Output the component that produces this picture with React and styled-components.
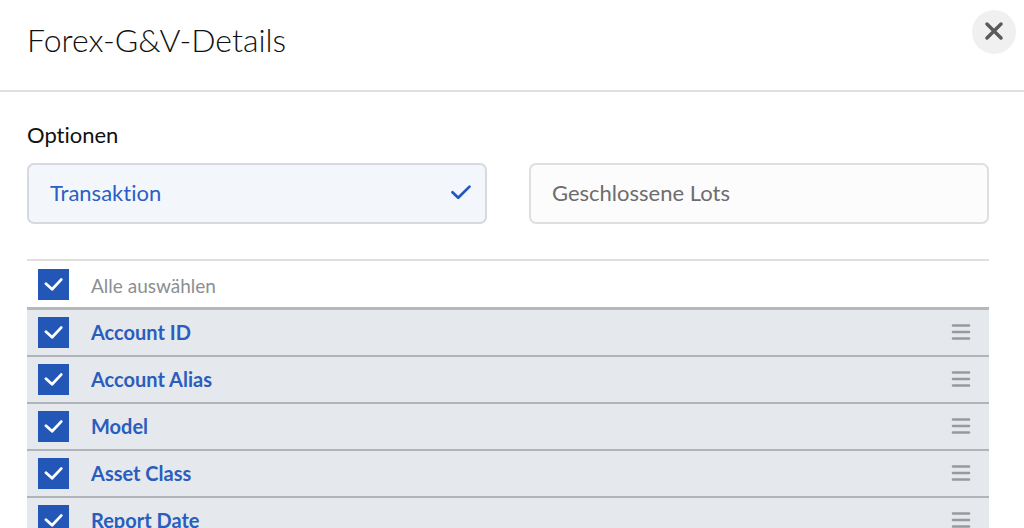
import React, { useState } from 'react'
import styled, { createGlobalStyle } from 'styled-components'

const GlobalStyle = createGlobalStyle`
    * {
        box-sizing: border-box;
    }

    body {
        margin: 0;
        background: #fff;
        color: #111;
        font-family: Lato, "Liberation Sans", sans-serif;
        font-variant-ligatures: none;
    }
`
const Page = styled.div`
    height: 100vh;
    overflow: hidden;
`
const Header = styled.header`
    display: flex;
    justify-content: space-between;
    align-items: flex-start;
    padding: 10px 8px 15px 27px;
    border-bottom: 2px solid #e0e0e1;
`
const Title = styled.h1`
    margin: 0;
    padding: 8px 0 13px;
    font-size: 32px;
    font-weight: 300;
    line-height: 44px;
`
const CloseButton = styled.button`
    display: flex;
    align-items: center;
    justify-content: center;
    width: 44px;
    height: 44px;
    padding: 0 0 2px;
    border: 0;
    border-radius: 50%;
    background: #f0f0f0;
    color: #5a5a5b;
    cursor: pointer;
`
const Content = styled.main`
    padding: 28px 35px 0 27px;
`
const SectionTitle = styled.h2`
    margin: 0 0 13px;
    font-size: 22px;
    font-weight: 400;
    line-height: 30px;
`
const Options = styled.div`
    display: grid;
    grid-template-columns: 1fr 1fr;
    gap: 42px;
    margin-bottom: 35px;
`
const OptionButton = styled.button`
    display: flex;
    align-items: center;
    justify-content: space-between;
    height: 61px;
    padding: 0 14px 2px 21px;
    border: 2px solid ${({ $active }) => ($active ? '#d6d9dd' : '#dfdfe0')};
    border-radius: 7px;
    background: ${({ $active }) => ($active ? '#f3f7fc' : '#fcfcfc')};
    color: ${({ $active }) => ($active ? '#2a5fc4' : '#6d6d6e')};
    font-family: inherit;
    font-size: 22px;
    font-variant-ligatures: none;
    line-height: 30px;
    cursor: pointer;
`
const List = styled.ul`
    margin: 0;
    padding: 0;
    border-top: 2px solid #e0e0e1;
    list-style: none;
`
const Row = styled.li`
    display: flex;
    align-items: center;
    height: 47px;
    padding: 0 18px 0 11px;
    border-bottom: 2px solid #b0b4b9;
    background: #e5e8ed;
`
const HeadRow = styled(Row)`
    height: 49px;
    border-bottom: 3px solid #b5b8bb;
    background: #fff;
`
const CheckBox = styled.span`
    display: grid;
    flex: none;
    width: 31px;
    height: 31px;

    > * {
        grid-area: 1 / 1;
        place-self: center;
    }

    svg {
        pointer-events: none;
    }
`
const CheckInput = styled.input`
    appearance: none;
    width: 31px;
    height: 31px;
    margin: 0;
    border: 1px solid #2257b8;
    background: #fff;
    cursor: pointer;

    &:checked {
        background: #2257b8;
    }
`
const Label = styled.label`
    flex: 1;
    padding: 0 0 2px 22px;
    color: #2a5dbd;
    font-size: 20px;
    font-weight: 700;
    line-height: 28px;
`
const HeadLabel = styled(Label)`
    padding: 4px 0 0 22px;
    color: #8c8e93;
    font-size: 19px;
    font-weight: 400;
`
const DragHandle = styled.button`
    display: flex;
    padding: 0 0 2px;
    border: 0;
    background: none;
    color: #96999e;
    cursor: grab;
`

const columns = [
    { id: 'account-id', text: 'Account ID' },
    { id: 'account-alias', text: 'Account Alias' },
    { id: 'model', text: 'Model' },
    { id: 'asset-class', text: 'Asset Class' },
    { id: 'report-date', text: 'Report Date' },
]

const options = ['Transaktion', 'Geschlossene Lots']

const Check = ({ id, checked, onChange }) => {
    return (
        <CheckBox>
            <CheckInput type="checkbox" id={id} checked={checked} onChange={onChange} />
            <svg width="19" height="15" viewBox="0 0 19 15" fill="none" aria-hidden="true">
                <path d="M2 6.8 L8.1 12.2 L17.2 2.6" stroke="#fff" strokeWidth="2.8" strokeLinecap="round" strokeLinejoin="round" />
            </svg>
        </CheckBox>
    )
}

const App = () => {
    const [option, setOption] = useState(options[0])
    const [selected, setSelected] = useState(columns.map(column => column.id))

    const allSelected = selected.length === columns.length

    const toggle = id => {
        setSelected(selected.includes(id) ? selected.filter(item => item !== id) : [...selected, id])
    }

    const toggleAll = () => {
        setSelected(allSelected ? [] : columns.map(column => column.id))
    }

    return (
        <Page>
            <GlobalStyle />
            <Header>
                <Title>Forex-G&amp;V-Details</Title>
                <CloseButton type="button" aria-label="Schließen">
                    <svg width="18" height="18" viewBox="0 0 18 18" fill="none" aria-hidden="true">
                        <path d="M2 2 L16 16 M16 2 L2 16" stroke="currentColor" strokeWidth="3.4" strokeLinecap="round" />
                    </svg>
                </CloseButton>
            </Header>
            <Content>
                <SectionTitle>Optionen</SectionTitle>
                <Options>
                    {
                        options.map(text => (
                            <OptionButton
                                key={text}
                                type="button"
                                $active={text === option}
                                aria-pressed={text === option}
                                onClick={() => setOption(text)}
                            >
                                {text}
                                {text === option && (
                                    <svg width="20" height="15" viewBox="0 0 20 15" fill="none" aria-hidden="true">
                                        <path d="M1.5 7.2 L7.2 12.8 L18.5 1.6" stroke="#2257c3" strokeWidth="2.7" strokeLinecap="round" strokeLinejoin="round" />
                                    </svg>
                                )}
                            </OptionButton>
                        ))
                    }
                </Options>
                <List>
                    <HeadRow>
                        <Check id="all" checked={allSelected} onChange={toggleAll} />
                        <HeadLabel htmlFor="all">Alle auswählen</HeadLabel>
                    </HeadRow>
                    {
                        columns.map(column => (
                            <Row key={column.id}>
                                <Check
                                    id={column.id}
                                    checked={selected.includes(column.id)}
                                    onChange={() => toggle(column.id)}
                                />
                                <Label htmlFor={column.id}>{column.text}</Label>
                                <DragHandle type="button" aria-label={`${column.text} verschieben`}>
                                    <svg width="20" height="18" viewBox="0 0 20 18" fill="none" aria-hidden="true">
                                        <path d="M2 2.5 H18 M2 9 H18 M2 15.5 H18" stroke="currentColor" strokeWidth="2.6" strokeLinecap="round" />
                                    </svg>
                                </DragHandle>
                            </Row>
                        ))
                    }
                </List>
            </Content>
        </Page>
    )
}

export default App
